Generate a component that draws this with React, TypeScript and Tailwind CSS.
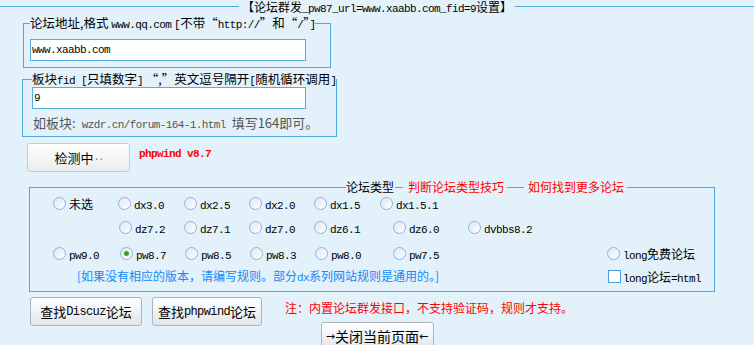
import React from "react";

// half-width ascii runs, like the bitmap song font of the original
const M = ({ children, className = "" }: { children: React.ReactNode; className?: string }) => (
  <span className={`font-['Liberation_Mono',monospace] text-[11px] leading-none tracking-[-0.6px] ${className}`}>{children}</span>
);

const Radio = ({ checked }: { checked?: boolean }) => (
  <span className="flex items-center justify-center w-[13px] h-[13px] shrink-0 rounded-full border border-[#93b1d6] bg-linear-to-br from-[#dfe7f1] to-white">
    {checked && <span className="w-[5px] h-[5px] rounded-full bg-[#3d9c1c]" />}
  </span>
);

type Opt = { label: React.ReactNode; w: string; checked?: boolean; empty?: boolean };

const row1: Opt[] = [
  { label: <span className="text-[12px]">未选</span>, w: "w-[65px]" },
  { label: <M>dx3.0</M>, w: "w-[66px]" },
  { label: <M>dx2.5</M>, w: "w-[65px]" },
  { label: <M>dx2.0</M>, w: "w-[65px]" },
  { label: <M>dx1.5</M>, w: "w-[66px]" },
  { label: <M>dx1.5.1</M>, w: "w-[80px]" },
];

const row2: Opt[] = [
  { label: null, w: "w-[66px]", empty: true },
  { label: <M>dz7.2</M>, w: "w-[65px]" },
  { label: <M>dz7.1</M>, w: "w-[65px]" },
  { label: <M>dz7.0</M>, w: "w-[65px]" },
  { label: <M>dz6.1</M>, w: "w-[79px]" },
  { label: <M>dz6.0</M>, w: "w-[75px]" },
  { label: <M>dvbbs8.2</M>, w: "w-[80px]" },
];

const row3: Opt[] = [
  { label: <M>pw9.0</M>, w: "w-[67px]" },
  { label: <M>pw8.7</M>, w: "w-[65px]", checked: true },
  { label: <M>pw8.5</M>, w: "w-[65px]" },
  { label: <M>pw8.3</M>, w: "w-[65px]" },
  { label: <M>pw8.0</M>, w: "w-[78px]" },
  { label: <M>pw7.5</M>, w: "w-[214px]" },
  {
    label: (
      <span>
        <M>long</M>
        <span className="text-[12px]">免费论坛</span>
      </span>
    ),
    w: "w-[90px]",
  },
];

const Row = ({ items, className = "" }: { items: Opt[]; className?: string }) => (
  <div className={`flex h-[16px] ${className}`}>
    {items.map((o, i) => (
      <div key={i} className={`flex items-center shrink-0 ${o.w}`}>
        {!o.empty && (
          <>
            <Radio checked={o.checked} />
            <span className="ml-[3px] leading-[16px] whitespace-nowrap">{o.label}</span>
          </>
        )}
      </div>
    ))}
  </div>
);

const Btn = ({ children, className = "" }: { children: React.ReactNode; className?: string }) => (
  <div
    className={`flex items-center justify-center whitespace-nowrap rounded-[3px] border border-[#aeb4ba] bg-linear-to-b from-white to-[#e2e6ea] text-[13px] text-black shadow-[inset_0_1px_0_#fff] ${className}`}
  >
    {children}
  </div>
);

export default function App() {
  return (
    <div
      lang="zh-CN"
      className="w-[754px] h-[345px] overflow-hidden bg-[#e3f2fa] text-black font-['Noto_Sans_CJK_SC',sans-serif]"
    >
      <fieldset className="border-0 border-t border-[#4eaadf] min-w-0">
        <legend className="mx-auto px-[3px] h-[13px] text-[12px] leading-[13px] whitespace-nowrap">
          【论坛群发<M>_pw87_url=www.xaabb.com_fid=9</M>设置】
        </legend>

        {/* forum url */}
        <fieldset className="mt-[2px] ml-[23px] w-[308px] border border-[#4eaadf] pl-[6px] pt-[8px] pb-[6px]">
          <legend className="h-[16px] text-[12.5px] leading-[16px] whitespace-nowrap">
            论坛地址,格式 <M>www.qq.com</M> <M>[</M>不带“<M>http://</M>”和“<M>/</M>”<M>]</M>
          </legend>
          <input
            readOnly
            value="www.xaabb.com"
            className="block w-[276px] h-[22px] border border-[#55aee2] bg-white px-px font-['Liberation_Mono',monospace] text-[11px] tracking-[-0.6px] outline-none"
          />
        </fieldset>

        {/* fid */}
        <fieldset className="mt-[3px] ml-[22px] w-[308px] border border-[#4eaadf] pl-[9px] pb-[5px]">
          <legend className="h-[16px] text-[12.5px] leading-[16px] whitespace-nowrap">
            板块<M>fid [</M>只填数字<M>]</M> “,”英文逗号隔开<M>[</M>随机循环调用<M>]</M>
          </legend>
          <input
            readOnly
            value="9"
            className="block w-[274px] h-[22px] border border-[#55aee2] bg-white px-px font-['Liberation_Mono',monospace] text-[11px] tracking-[-0.6px] outline-none"
          />
          <div className="mt-[6px] ml-px h-[16px] leading-[16px] text-[13px] text-[#555] whitespace-nowrap">
            如板块:<M> wzdr.cn/forum-164-1.html </M>填写164即可。
          </div>
        </fieldset>

        {/* check */}
        <div className="mt-[6px] ml-[27px] flex items-start">
          <Btn className="w-[103px] h-[29px] border-[#c8ccd0] from-[#fafafa] to-[#e9ecee] text-[#8a8a8a]">
            检测中<M className="text-[#8a8a8a] tracking-[-2px]">..</M>
          </Btn>
          <div className="ml-[9px] mt-[-1px] h-[16px] leading-[16px]">
            <M className="font-bold text-[#ff0000]">phpwind v8.7</M>
          </div>
        </div>

        {/* forum type */}
        <fieldset className="mt-[7px] ml-[29px] w-[686px] border border-[#4eaadf] pl-[23px] pb-[7px]">
          <legend className="ml-[293px] pr-[3px] h-[16px] text-[12px] leading-[16px]">
            <div className="flex items-center h-[16px]">
              <span>论坛类型</span>
              <span className="ml-px w-[8px] h-px bg-[#4eaadf]" />
              <span className="ml-[5px] text-[#ff0000]">判断论坛类型技巧</span>
              <span className="ml-[3px] w-[17px] h-px bg-[#4eaadf]" />
              <span className="ml-[4px] text-[#ff0000]">如何找到更多论坛</span>
            </div>
          </legend>
          <Row items={row1} />
          <Row items={row2} className="mt-[8px]" />
          <Row items={row3} className="mt-[10px]" />
          <div className="mt-[7px] flex h-[16px] items-center">
            <div className="w-[555px] shrink-0 pl-[24px] text-[12px] leading-[16px] text-[#1589f5] whitespace-nowrap">
              [如果没有相应的版本，请编写规则。部分<M>dx</M>系列网站规则是通用的。]
            </div>
            <span className="w-[13px] h-[13px] shrink-0 border border-[#4b9fd9] bg-white" />
            <span className="ml-[2px] leading-[16px] whitespace-nowrap">
              <M>long</M>
              <span className="text-[12px]">论坛</span>
              <M>=html</M>
            </span>
          </div>
        </fieldset>

        {/* actions */}
        <div className="mt-[5px] ml-[30px] flex h-[25px] items-start">
          <Btn className="w-[112px] h-[29px] shrink-0">
            查找<M className="text-[12px]">Discuz</M>论坛
          </Btn>
          <Btn className="ml-[10px] w-[110px] h-[29px] shrink-0">
            查找<M className="text-[12px]">phpwind</M>论坛
          </Btn>
          <div className="ml-[23px] mt-[3px] text-[12px] leading-[16px] text-[#ff0000] whitespace-nowrap">
            注：内置论坛群发接口，不支持验证码，规则才支持。
          </div>
        </div>
        <Btn className="mx-auto w-[113px] h-[28px] text-[14px]">
          <span className="font-['DejaVu_Sans',sans-serif] text-[11px] leading-none">→</span>
          关闭当前页面
          <span className="font-['DejaVu_Sans',sans-serif] text-[11px] leading-none">←</span>
        </Btn>
      </fieldset>
    </div>
  );
}
